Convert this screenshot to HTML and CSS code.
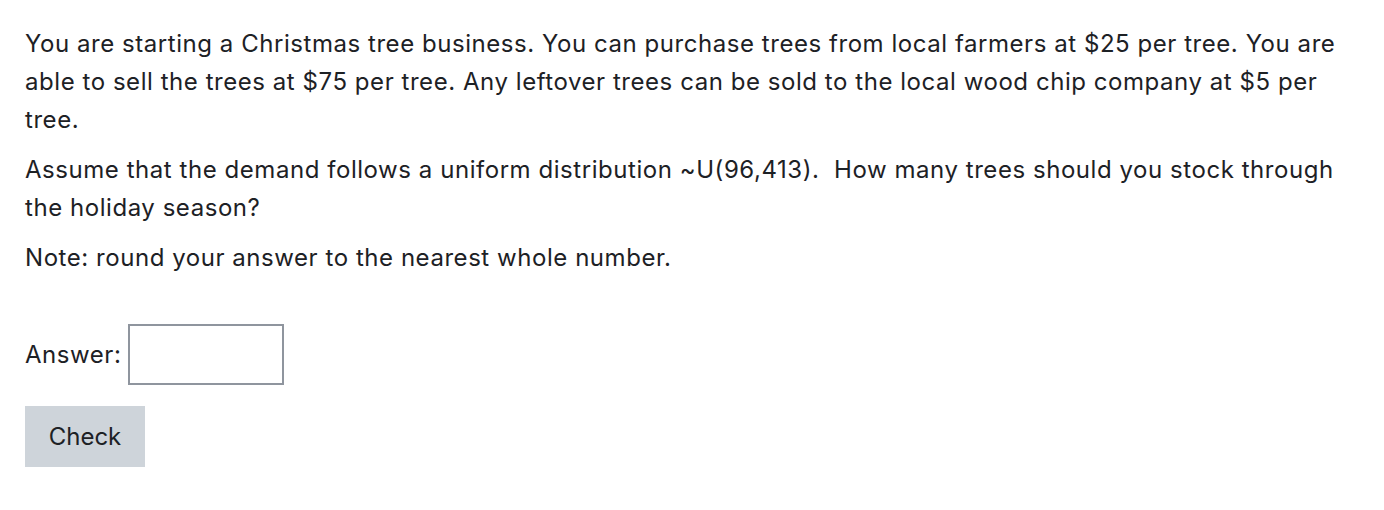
FILE: index.html
```html
<!DOCTYPE html>
<html>
<head>
<meta charset="utf-8">
<link rel="stylesheet" href="styles.css">
</head>
<body>
<div class="question">
  <div class="qtext">
    <p>You are starting a Christmas tree business. You can purchase trees from local farmers at $25 per tree. You are able to sell the trees at $75 per tree. Any leftover trees can be sold to the local wood chip company at $5 per tree.</p>
    <p>Assume that the demand follows a uniform distribution ~U(96,413).&nbsp; How many trees should you stock through the holiday season?</p>
    <p>Note: round your answer to the nearest whole number.</p>
  </div>
  <div class="ablock">
    <label class="alabel" for="ans">Answer:</label>
    <input class="ainput" id="ans" type="text">
  </div>
  <button class="check" type="button">Check</button>
</div>
</body>
</html>
```
FILE: styles.css
```css
html, body {
  margin: 0;
  padding: 0;
  background: #ffffff;
}
body {
  font-family: Inter, "Noto Sans", "Liberation Sans", sans-serif;
  font-size: 24px;
  letter-spacing: 0.55px;
  line-height: 38px;
  color: #1d2125;
}
.question {
  padding: 25px 36px 0 25px;
}
.qtext p {
  margin: 0 0 12px 0;
}
.ablock {
  display: flex;
  align-items: center;
  gap: 7px;
  margin-top: 47px;
}
.alabel {
  line-height: 38px;
}
.ainput {
  box-sizing: border-box;
  width: 156px;
  height: 61px;
  border: 2px solid #8f959e;
  background: #fff;
  margin: 0;
  padding: 0 10px;
  font: inherit;
}
.check {
  margin-top: 21px;
  box-sizing: border-box;
  width: 120px;
  height: 61px;
  background: #ced4da;
  border: none;
  border-radius: 0;
  font: inherit;
  color: #1d2125;
  padding: 0;
}
```
